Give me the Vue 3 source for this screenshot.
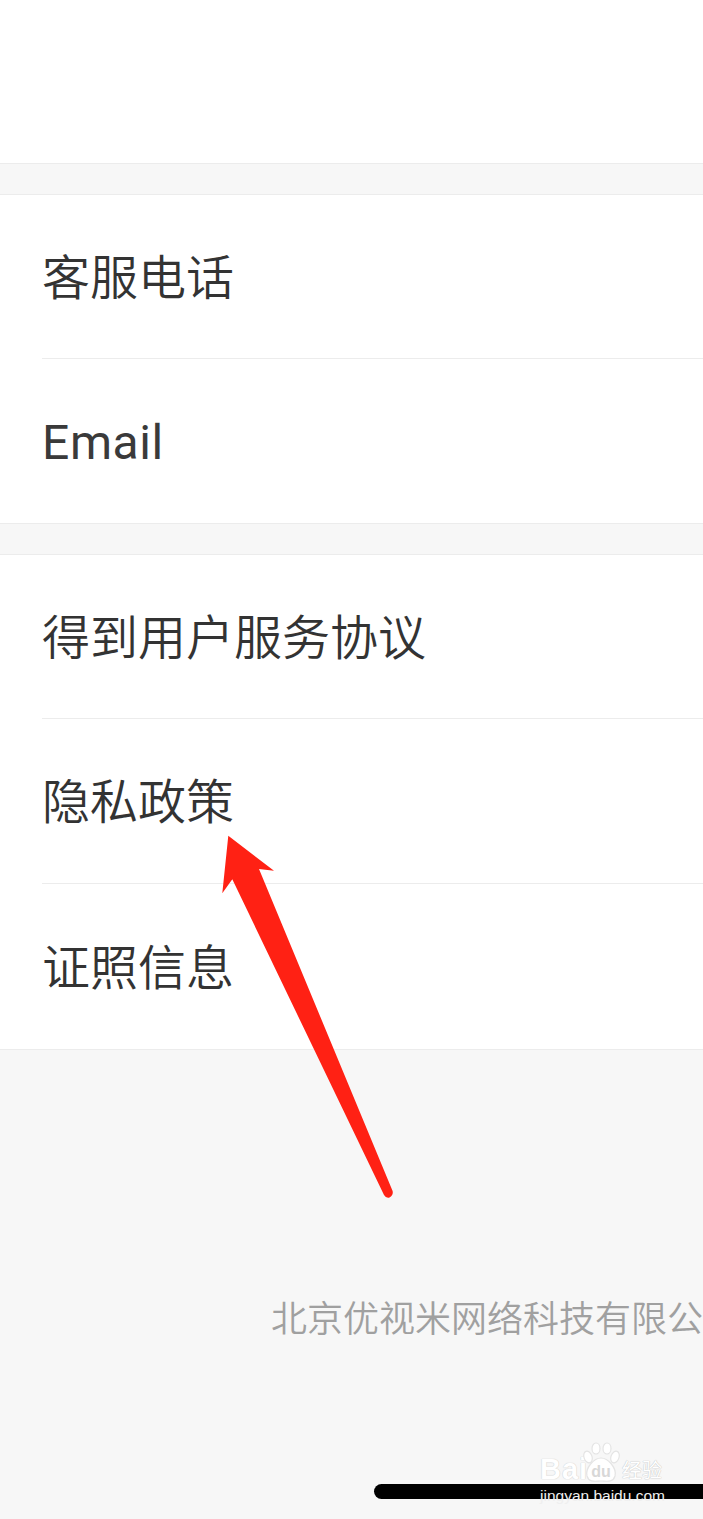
<script setup>
const groups = [
  [{ text: '客服电话' }, { text: 'Email', latin: true }],
  [{ text: '得到用户服务协议' }, { text: '隐私政策' }, { text: '证照信息' }],
]
</script>

<template>
  <div class="page">
    <div class="top"></div>
    <div v-for="(items, g) in groups" :key="g" class="group">
      <div v-for="item in items" :key="item.text" class="row">
        <span class="label" :class="{ latin: item.latin }">{{ item.text }}</span>
      </div>
    </div>

    <div class="footer">
      <div class="company">北京优视米网络科技有限公司</div>
      <div class="home-bar"></div>
    </div>

    <!-- red annotation arrow drawn over the list -->
    <svg class="arrow" width="703" height="1519" viewBox="0 0 703 1519">
      <path
        d="M228.3 835.7 L274 870.7 L259 869 L392.6 1191 Q393.6 1195 389.5 1197.5 Q386 1198.5 384 1195 L232.3 879.3 L222.3 893.3 Z"
        fill="#ff2114"
      />
    </svg>

    <!-- watermark -->
    <div class="mark">
      <div class="mark-top">
        <span class="mark-bai">Bai</span>
        <svg class="paw" width="38" height="42" viewBox="0 0 38 42">
          <g fill="#fff" stroke="#e4e4e4" stroke-width="1.2">
            <ellipse cx="6" cy="15" rx="4" ry="6" transform="rotate(-20 6 15)" />
            <ellipse cx="14" cy="6.5" rx="4" ry="5.5" />
            <ellipse cx="25" cy="6.5" rx="4" ry="5.5" />
            <ellipse cx="33" cy="15" rx="4" ry="6" transform="rotate(20 33 15)" />
            <path d="M19 16 C26 16 35 26 33 34 C31 41 24 39 19 39 C14 39 7 41 5 34 C3 26 12 16 19 16 Z" />
          </g>
          <text x="19" y="35" text-anchor="middle" class="paw-text">du</text>
        </svg>
        <span class="mark-cn">经验</span>
      </div>
      <div class="mark-url">jingyan.baidu.com</div>
    </div>
  </div>
</template>

<style scoped>
.page {
  position: relative;
  width: 703px;
  height: 1519px;
  overflow: hidden;
  background: #f7f7f7;
  font-family: Roboto, "Noto Sans CJK SC", sans-serif;
}

.top {
  height: 163px;
  background: #fff;
  border-bottom: 1px solid #ececec;
}

.group {
  margin-top: 30px;
  background: #fff;
  border-top: 1px solid #ececec;
  border-bottom: 1px solid #ececec;
}

.row {
  height: 164px;
  margin-left: 42px;
  padding-top: 4px;
  display: flex;
  align-items: center;
  box-sizing: border-box;
  border-bottom: 1px solid #ececec;
}

.row:nth-child(2):not(:last-child),
.row:nth-child(3) {
  height: 165px;
}

.row:last-child {
  border-bottom: none;
}

.label {
  font-size: 48px;
  line-height: 64px;
  font-weight: 350;
  color: #333;
}

.label.latin {
  font-weight: 400;
  letter-spacing: 0.6px;
  color: #3a3a3a;
}

.footer {
  display: flex;
  flex-direction: column;
  padding-top: 246px;
}

.company {
  margin-left: 271px;
  font-size: 36px;
  line-height: 48px;
  font-weight: 350;
  color: #a0a0a0;
  white-space: nowrap;
}

.home-bar {
  margin-top: 140px;
  margin-left: 374px;
  width: 340px;
  height: 15px;
  border-radius: 8px;
  background: #000;
}

.arrow {
  position: absolute;
  left: 0;
  top: 0;
}

.mark {
  position: absolute;
  left: 540px;
  top: 1442px;
  width: 130px;
  color: #fff;
}

.mark-top {
  display: flex;
  align-items: flex-end;
  height: 42px;
}

.mark-bai {
  font-family: "Liberation Sans", sans-serif;
  font-size: 29px;
  line-height: 30px;
  font-weight: 700;
  color: #fff;
  text-shadow: 0 0 1px #cfcfcf, 0 0 1px #cfcfcf;
  letter-spacing: 1px;
  width: 42px;
  flex: none;
}

.paw {
  flex: none;
}

.paw-text {
  font-family: "Liberation Sans", sans-serif;
  font-size: 16px;
  font-weight: 700;
  fill: #d8d8d8;
}

.mark-cn {
  font-family: "Noto Sans CJK SC", sans-serif;
  font-size: 20px;
  line-height: 28px;
  margin-left: 2px;
  color: #fff;
  text-shadow: 0 0 1px #c4c4c4, 0 0 1px #c4c4c4;
  white-space: nowrap;
}

.mark-url {
  font-family: "Liberation Sans", sans-serif;
  font-size: 15.5px;
  line-height: 18px;
  margin-top: 3px;
  color: #efefef;
  white-space: nowrap;
}
</style>

<style>
html, body {
  margin: 0;
  background: #f7f7f7;
}
</style>
